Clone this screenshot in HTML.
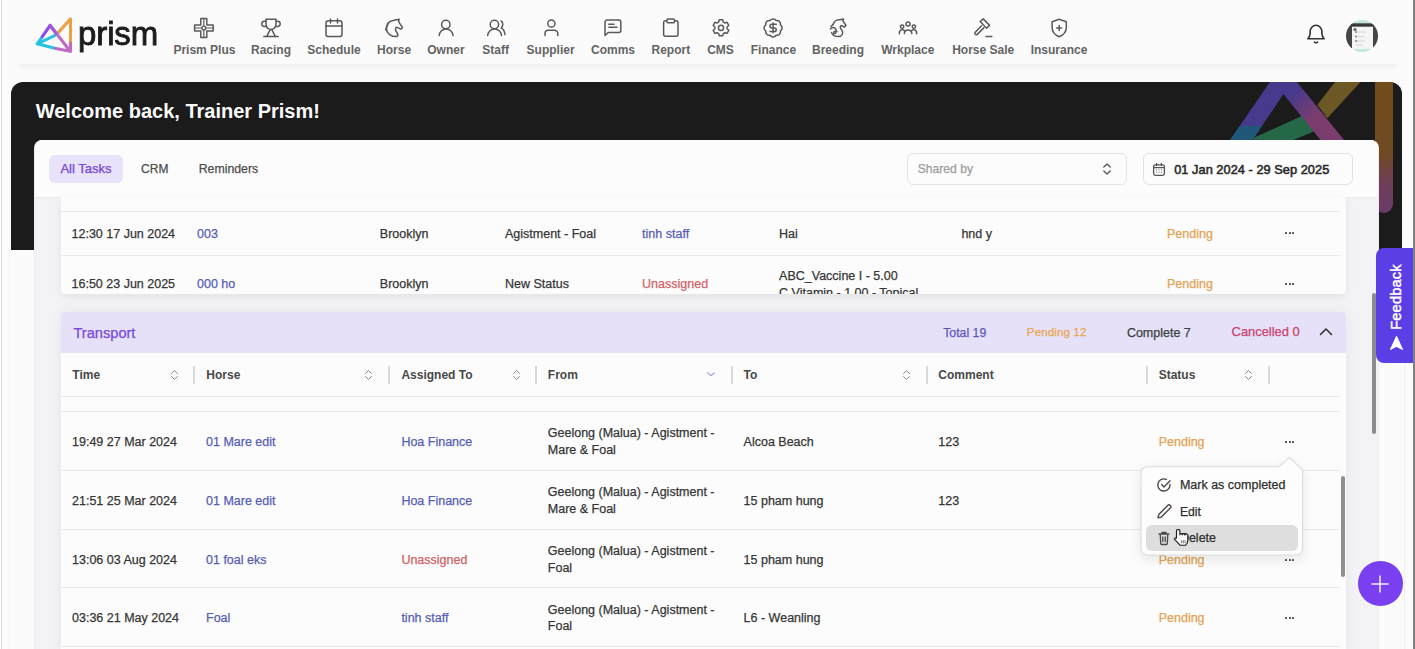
<!DOCTYPE html>
<html><head><meta charset="utf-8">
<style>
*{box-sizing:border-box;margin:0;padding:0}
html,body{width:1415px;height:649px;overflow:hidden}
body{font-family:"Liberation Sans",sans-serif;background:#fbfbfb;position:relative;color:#222}
.abs{position:absolute}
.frame-l{position:absolute;left:1px;top:0;width:1px;height:649px;background:#dedede}
.frame-r{position:absolute;right:2px;top:0;width:1px;height:649px;background:#dcdcdc}
.header{position:absolute;left:2px;top:0;width:1409px;height:66px}
.hshadow{position:absolute;left:14px;top:0;width:1388px;height:64px;background:#fbfbfb;border-radius:0 0 6px 6px;box-shadow:0 8px 7px -4px rgba(0,0,0,0.05)}
.nav{position:absolute;top:0;height:66px}
.nav .lbl{position:absolute;top:43px;font-size:12px;font-weight:bold;color:#636363;white-space:nowrap;letter-spacing:0}
.nav svg{position:absolute;top:17px}
.banner{position:absolute;left:11px;top:82px;width:1391px;height:168px;background:#1b1b1b;border-radius:12px 12px 0 0;overflow:hidden}
.welcome{position:absolute;left:35.7px;top:100px;font-size:20px;font-weight:bold;color:#fafafa;white-space:nowrap}
.card{position:absolute;left:35px;top:140px;width:1343px;height:520px;background:#f3f3f5;box-shadow:-1px 0 0 #ececee,1px 0 0 #ececee;border-radius:8px 8px 0 0}
.cardhead{position:absolute;left:35px;top:140px;width:1343px;height:57.5px;background:#fcfcfc;border-radius:8px 8px 0 0;border-bottom:1px solid #ebebeb}
.pill{position:absolute;left:48.5px;top:155.3px;width:74.3px;height:27.4px;background:#e8e2fb;border-radius:6px}
.selbox{position:absolute;border:1px solid #e3e3e3;border-radius:6px;background:#fcfcfc}
.t{position:absolute;white-space:nowrap;line-height:1;-webkit-text-stroke:0.25px currentColor}
.tbl1{left:61px;top:197px;width:1285px;height:97px;background:#fcfcfc;border-radius:0 0 4px 4px;overflow:hidden;box-shadow:0 3px 8px rgba(0,0,0,0.07)}
.tbl2{left:61px;top:312px;width:1285px;height:340px;background:#fcfcfc;border-radius:4px 4px 0 0;overflow:hidden;box-shadow:0 0 14px rgba(0,0,0,0.06)}
.thead{position:absolute;left:0;top:0;width:1285px;height:41px;background:#e6e1f8}
.dot{position:absolute;width:2.1px;height:2.1px;background:#555;border-radius:0.6px}
.hl{position:absolute;left:0;width:1279px;height:1px;background:#e9e9e9}
.vd{position:absolute;top:54px;width:2px;height:17.5px;background:#d9d9d9}
.nav .ic{position:absolute;top:16px}
.nav .lbl{transform:translateX(-50%)}
.logo-t{position:absolute;left:75.5px;top:13.5px;font-size:34px;color:#1c1c1c;letter-spacing:-0.1px;transform:scaleX(0.97);transform-origin:left;font-weight:normal;-webkit-text-stroke:0.9px #1c1c1c;line-height:normal}
.avatar{left:1344px;top:20px;width:32px;height:32px;border-radius:50%;background:#4a4a4a;overflow:hidden}
.av-top{position:absolute;left:0;top:0;width:32px;height:4px;background:#a6e3d0}
.av-in{position:absolute;left:6px;top:6px;width:20px;height:26px;background:#f6f6f6;border-top:2px solid #333}
.popup{left:1141px;top:467px;width:162px;height:88px;background:#fdfdfd;border:1px solid #e2e2e2;border-radius:7px;box-shadow:0 5px 12px rgba(0,0,0,0.10)}
.fb{left:1376px;top:248px;width:45px;height:115px;background:#5c3ee6;border-radius:8px 0 0 8px}
.frame-r{position:absolute;left:1413px;top:0;width:2px;height:649px;background:#808080;z-index:5}
</style></head>
<body>
<div class="frame-l"></div>
<div class="frame-r"></div>
<div class="abs" style="left:1404px;top:363px;width:1px;height:286px;background:#f0f0f0"></div>
<div class="abs" style="left:9px;top:250px;width:1px;height:399px;background:#f4f4f4"></div>
<div class="hshadow"></div>
<div class="header">
<svg class="abs" style="left:-1px;top:0" width="170" height="66" viewBox="0 0 170 66">
<defs>
<linearGradient id="gp" x1="48.8" y1="24.9" x2="36" y2="43.7" gradientUnits="userSpaceOnUse"><stop offset="0" stop-color="#8c4cf0"/><stop offset="0.5" stop-color="#7a6ae8"/><stop offset="0.6" stop-color="#2bc3e3"/><stop offset="1" stop-color="#22c5e0"/></linearGradient>
<linearGradient id="gc" x1="36" y1="43.7" x2="69.6" y2="51.6" gradientUnits="userSpaceOnUse"><stop offset="0" stop-color="#25c3e2"/><stop offset="0.5" stop-color="#33b8e6"/><stop offset="0.7" stop-color="#b38ee8"/><stop offset="1" stop-color="#c46ec4"/></linearGradient>
<linearGradient id="gk" x1="48.8" y1="24.9" x2="69.6" y2="51.6" gradientUnits="userSpaceOnUse"><stop offset="0" stop-color="#9a55e6"/><stop offset="1" stop-color="#c36cc0"/></linearGradient>
</defs>
<g fill="none" stroke-width="3.1" stroke-linecap="round" stroke-linejoin="round">
<path d="M57.4,32.4L69.5,18.9V43" stroke="#eaa24a"/>
<path d="M54,35.4L36.3,43.8L54.6,48.4" stroke="#27c2e1"/>
<path d="M36.3,43.8L41.3,36.6" stroke="#27c2e1"/>
<path d="M41.3,36.6L49.1,25.5" stroke="#8d4cf0"/>
<path d="M49.1,25.5L69.3,51.3L54.6,48.4" stroke="#c26bc3"/>
<path d="M49.1,25.5L55,33" stroke="#a058e0"/>
<path d="M69.5,43V51.3" stroke="#c26bc3"/>
</g>
</svg>
<div class="abs logo-t">prism</div>
<div class="nav" style="left:-2px"><svg class="ic" style="left:192.4px" width="24" height="24" viewBox="0 0 24 24" fill="none" stroke="#5a5a5a" stroke-width="1.5" stroke-linecap="round" stroke-linejoin="round"><path d="M8.8,2.5H14.8V9H21.2V15H14.8V21.5H8.8V15H2.6V9H8.8Z"/><path d="M11.8,2.5V21.5M2.6,12H21.2" stroke-width="1.2"/><circle cx="11.8" cy="12" r="2.6" fill="#5a5a5a" stroke="none"/><circle cx="11.8" cy="12" r="1.2" fill="#fbfbfb" stroke="none"/></svg>
<div class="lbl" style="left:204.4px">Prism Plus</div>
<svg class="ic" style="left:259.0px" width="24" height="24" viewBox="0 0 24 24" fill="none" stroke="#5a5a5a" stroke-width="1.5" stroke-linecap="round" stroke-linejoin="round"><path d="M7,3.2H17V8.2A5,5.3 0 0 1 7,8.2Z"/><path d="M7,5.2H5.4A2.6,2.6 0 0 0 5.4,10.4H7.6M17,5.2H18.6A2.6,2.6 0 0 1 18.6,10.4H16.4"/><path d="M11.2,13.6L7.6,20.6M12.8,13.6L16.4,20.6M4.8,20.6H19.2"/></svg>
<div class="lbl" style="left:271.0px">Racing</div>
<svg class="ic" style="left:322.0px" width="24" height="24" viewBox="0 0 24 24" fill="none" stroke="#5a5a5a" stroke-width="1.5" stroke-linecap="round" stroke-linejoin="round"><rect x="4" y="4.7" width="16" height="15.9" rx="2.4"/><path d="M4,10H20M8.5,3V6.9M15.5,3V6.9"/></svg>
<div class="lbl" style="left:334.0px">Schedule</div>
<svg class="ic" style="left:382.1px" width="24" height="24" viewBox="0 0 24 24" fill="none" stroke="#5a5a5a" stroke-width="1.5" stroke-linecap="round" stroke-linejoin="round"><path d="M15,20.5C10,21 4.8,18 4.5,13C4.2,8.5 7,5 11,4.5L17.2,3.3L16.6,5.6L20.5,11.6L18.6,13.2L14.6,11.2C13,12.3 13.2,14.2 14.8,16.4C16,18 16,19.6 15,20.5Z"/><path d="M6.5,6.5L3.6,13.8"/></svg>
<div class="lbl" style="left:394.1px">Horse</div>
<svg class="ic" style="left:433.9px" width="24" height="24" viewBox="0 0 24 24" fill="none" stroke="#5a5a5a" stroke-width="1.5" stroke-linecap="round" stroke-linejoin="round"><circle cx="11.8" cy="8.5" r="4.2"/><path d="M5.2,19.6A6.9,6.6 0 0 1 19,19.6"/></svg>
<div class="lbl" style="left:445.9px">Owner</div>
<svg class="ic" style="left:483.7px" width="24" height="24" viewBox="0 0 24 24" fill="none" stroke="#5a5a5a" stroke-width="1.5" stroke-linecap="round" stroke-linejoin="round"><circle cx="10.4" cy="8.5" r="4.2"/><path d="M3.7,19.6A6.9,6.6 0 0 1 17.5,19.6"/><path d="M17.2,5C19.2,6.2 19.4,10.4 17.2,11.8C19.4,13 20.7,15.8 20.9,18.6"/></svg>
<div class="lbl" style="left:495.7px">Staff</div>
<svg class="ic" style="left:538.6px" width="24" height="24" viewBox="0 0 24 24" fill="none" stroke="#5a5a5a" stroke-width="1.5" stroke-linecap="round" stroke-linejoin="round"><circle cx="12.4" cy="7.5" r="3.6"/><path d="M6,19.6V17.6A3.3,3.3 0 0 1 9.3,14.3H15.5A3.3,3.3 0 0 1 18.8,17.6V19.6"/></svg>
<div class="lbl" style="left:550.6px">Supplier</div>
<svg class="ic" style="left:601.0px" width="24" height="24" viewBox="0 0 24 24" fill="none" stroke="#5a5a5a" stroke-width="1.5" stroke-linecap="round" stroke-linejoin="round"><path d="M4,19.5V6.1A2,2 0 0 1 6,4.1H17.8A2,2 0 0 1 19.8,6.1V14.4A2,2 0 0 1 17.8,16.4H7.4Z"/><path d="M7.8,8.2H13M7.8,11.3H16"/></svg>
<div class="lbl" style="left:613.0px">Comms</div>
<svg class="ic" style="left:658.8px" width="24" height="24" viewBox="0 0 24 24" fill="none" stroke="#5a5a5a" stroke-width="1.5" stroke-linecap="round" stroke-linejoin="round"><rect x="4.6" y="4.7" width="14.4" height="15.6" rx="2"/><rect x="7.9" y="3.1" width="7.7" height="3.6" rx="1.2" fill="#fbfbfb"/></svg>
<div class="lbl" style="left:670.8px">Report</div>
<svg class="ic" style="left:708.5px" width="24" height="24" viewBox="0 0 24 24" fill="none" stroke="#5a5a5a" stroke-width="1.5" stroke-linecap="round" stroke-linejoin="round"><path d="M9.68,6.05L10.30,3.78L13.70,3.78L14.32,6.05L15.82,6.91L18.09,6.31L19.80,9.27L18.14,10.94L18.14,12.66L19.80,14.33L18.09,17.29L15.82,16.69L14.32,17.55L13.70,19.82L10.30,19.82L9.68,17.55L8.18,16.69L5.91,17.29L4.20,14.33L5.86,12.66L5.86,10.94L4.20,9.27L5.91,6.31L8.18,6.91Z" stroke-linejoin="round"/><circle cx="12" cy="11.8" r="2.6"/></svg>
<div class="lbl" style="left:720.5px">CMS</div>
<svg class="ic" style="left:761.4px" width="24" height="24" viewBox="0 0 24 24" fill="none" stroke="#5a5a5a" stroke-width="1.5" stroke-linecap="round" stroke-linejoin="round"><g transform="translate(12.1,11.9) scale(0.9) translate(-12,-12)"><path d="M3.85 8.62a4 4 0 0 1 4.78-4.77 4 4 0 0 1 6.74 0 4 4 0 0 1 4.78 4.78 4 4 0 0 1 0 6.74 4 4 0 0 1-4.77 4.78 4 4 0 0 1-6.75 0 4 4 0 0 1-4.78-4.77 4 4 0 0 1 0-6.76Z" stroke-width="1.7"/><path d="M15.5 8h-5a2 2 0 1 0 0 4h3a2 2 0 1 1 0 4H8.5M12 17.5V6.5" stroke-width="1.7"/></g></svg>
<div class="lbl" style="left:773.4px">Finance</div>
<svg class="ic" style="left:826.0px" width="24" height="24" viewBox="0 0 24 24" fill="none" stroke="#5a5a5a" stroke-width="1.5" stroke-linecap="round" stroke-linejoin="round"><path d="M7,8.5C8,5.5 11,3.5 14,3.8L17.5,3L17,5L20,9.5L18.5,11L15,9.5C13.5,10.5 14.5,13 16,14.5C17.5,16.5 16.5,20.5 12.5,20.6C9,20.7 6.5,19 5.5,16.5"/><path d="M4.5,13C6,11 9,11 10,13.5C11,16 9,18.5 8,17.5C6.5,16 9.5,14.5 11,15.5"/><path d="M7,8.5L5,10.5"/></svg>
<div class="lbl" style="left:838.0px">Breeding</div>
<svg class="ic" style="left:895.8px" width="24" height="24" viewBox="0 0 24 24" fill="none" stroke="#5a5a5a" stroke-width="1.5" stroke-linecap="round" stroke-linejoin="round"><circle cx="12.1" cy="8" r="2"/><circle cx="6.1" cy="10.6" r="1.7"/><circle cx="17.9" cy="10.6" r="1.7"/><path d="M8.3,17.5A3.9,4.4 0 0 1 15.9,17.5M3.4,17.8A2.9,3.6 0 0 1 8.6,15M20.6,17.8A2.9,3.6 0 0 0 15.4,15"/></svg>
<div class="lbl" style="left:907.8px">Wrkplace</div>
<svg class="ic" style="left:971.2px" width="24" height="24" viewBox="0 0 24 24" fill="none" stroke="#5a5a5a" stroke-width="1.5" stroke-linecap="round" stroke-linejoin="round"><path d="M9.2,5.6L12.2,2.9L18.6,9.4L15.6,12.2Z"/><path d="M10.6,9.7L4,16.6A1.5,1.5 0 0 0 6,18.6L12.8,11.9"/><path d="M15,20.6H20.8"/></svg>
<div class="lbl" style="left:983.2px">Horse Sale</div>
<svg class="ic" style="left:1047.0px" width="24" height="24" viewBox="0 0 24 24" fill="none" stroke="#5a5a5a" stroke-width="1.5" stroke-linecap="round" stroke-linejoin="round"><path d="M12.2,3.2L19.3,5.8V11.5C19.3,16 16,19.2 12.2,20.8C8.4,19.2 5.1,16 5.1,11.5V5.8Z" stroke-linejoin="round"/><path d="M12.2,9.4V14.4M9.7,11.9H14.7"/></svg>
<div class="lbl" style="left:1059.0px">Insurance</div></div>
<svg class="abs" style="left:1301px;top:22px" width="26" height="24" viewBox="0 0 26 24" fill="none" stroke="#333" stroke-width="1.6" stroke-linecap="round" stroke-linejoin="round"><path d="M4.8,16.8H21.2C19.6,15.4 18.9,13.8 18.9,11.6V9.6C18.9,6.2 16.3,3.3 13,3.3C9.7,3.3 7.1,6.2 7.1,9.6V11.6C7.1,13.8 6.4,15.4 4.8,16.8Z"/><path d="M11.4,20.2A2.2,1.6 0 0 0 14.6,20.2"/></svg>
<svg class="abs" style="left:1344px;top:20px" width="32" height="32" viewBox="0 0 32 32"><defs><clipPath id="avc"><circle cx="16" cy="16" r="16"/></clipPath></defs><g clip-path="url(#avc)"><rect width="32" height="32" fill="#f4f4f4"/><rect x="0" y="0" width="6" height="32" fill="#454545"/><rect x="27" y="0" width="5" height="32" fill="#454545"/><rect x="6" y="0" width="21" height="3.5" fill="#bfe8dc"/><rect x="5" y="3.3" width="23" height="3.4" fill="#3a3a3a"/><rect x="7" y="29" width="19" height="3" fill="#bfe8dc"/><circle cx="9" cy="9.5" r="1.6" fill="#666"/><path d="M10,12H20M10,16.5H18M10,21H19M10,25H17" stroke="#cfcfcf" stroke-width="0.8"/><circle cx="10" cy="12" r="0.9" fill="#777"/><circle cx="10" cy="16.5" r="0.9" fill="#777"/><circle cx="10" cy="21" r="0.9" fill="#777"/></g></svg>
</div>
<div class="banner"></div>
<svg class="abs" style="left:11px;top:82px" width="1391" height="168" viewBox="11 82 1391 168">
<defs>
<linearGradient id="ob" x1="0" y1="82" x2="0" y2="213" gradientUnits="userSpaceOnUse"><stop offset="0" stop-color="#734c1c"/><stop offset="0.55" stop-color="#6f4a22"/><stop offset="0.75" stop-color="#6e3f55"/><stop offset="1" stop-color="#6a3a6a"/></linearGradient>
<linearGradient id="pk" x1="1290" y1="95" x2="1312" y2="118" gradientUnits="userSpaceOnUse"><stop offset="0" stop-color="#47398c"/><stop offset="1" stop-color="#7a3d6e"/></linearGradient>
<clipPath id="band"><path d="M1282.3,64L1223.2,150L1352,150Z M1283.5,94.1L1245.7,150L1328.8,150Z" clip-rule="evenodd"/></clipPath>
</defs>
<path d="M1317.4,104.7L1339.7,76L1366,76L1327.3,118.2Z" fill="#6b5824"/>
<path d="M1250,139.5L1303,115.5L1322,128L1291,141Z" fill="#246848"/>
<g clip-path="url(#band)">
<rect x="1200" y="60" width="200" height="100" fill="#47398c"/>
<rect x="1200" y="126" width="70" height="30" fill="#1f5878"/>
<rect x="1286" y="90" width="80" height="70" fill="url(#pk)"/>
</g>
<rect x="1375" y="70" width="18" height="143" rx="9" fill="url(#ob)"/>
</svg>
<div class="welcome">Welcome back, Trainer Prism!</div>
<div class="card"></div>
<div class="cardhead"></div>
<div class="pill"></div>
<div class="selbox" style="left:907px;top:153px;width:220px;height:32px"></div>
<div class="selbox" style="left:1143px;top:153px;width:210px;height:31.5px"></div>
<div class="t" style="left:60.4px;top:162.40px;font-size:13px;color:#7443d8;">All Tasks</div>
<div class="t" style="left:141px;top:163.24px;font-size:12px;color:#4e4e4e;letter-spacing:0.1px;">CRM</div>
<div class="t" style="left:198.7px;top:162.99px;font-size:12.3px;color:#4e4e4e;">Reminders</div>
<div class="t" style="left:917.8px;top:163.06px;font-size:12.1px;color:#9c9c9c;">Shared by</div>
<svg class="abs" style="left:1100px;top:161px" width="14" height="16" viewBox="0 0 14 16" fill="none" stroke="#555" stroke-width="1.3" stroke-linecap="round" stroke-linejoin="round"><path d="M3.8,6L7,3L10.2,6M3.8,10L7,13L10.2,10"/></svg>
<svg class="abs" style="left:1151px;top:161px" width="16" height="16" viewBox="0 0 16 16" fill="none" stroke="#555" stroke-width="1.3"><rect x="2.6" y="3.8" width="10.8" height="10.6" rx="1.8"/><path d="M2.6,6.7H13.4M5.6,2.4V4.6M10.4,2.4V4.6" stroke-linecap="round"/><path d="M5.2,9H6M7.6,9H8.4M10,9H10.8M5.2,11.3H6M7.6,11.3H8.4M10,11.3H10.8" stroke-width="1"/></svg>
<div class="t" style="left:1174.2px;top:163.91px;font-size:12.75px;color:#2a2a2a;-webkit-text-stroke:0.55px #2a2a2a;letter-spacing:0.05px;">01 Jan 2024 - 29 Sep 2025</div>
<div class="abs tbl1">
<div class="hl" style="top:14px"></div><div class="hl" style="top:58px"></div>
<div class="t" style="left:10.5px;top:30.52px;font-size:12.5px;color:#363636;">12:30 17 Jun 2024</div>
<div class="t" style="left:136px;top:30.52px;font-size:12.5px;color:#565eb6;">003</div>
<div class="t" style="left:318.8px;top:30.52px;font-size:12.5px;color:#363636;">Brooklyn</div>
<div class="t" style="left:444px;top:30.52px;font-size:12.5px;color:#363636;">Agistment - Foal</div>
<div class="t" style="left:581.1px;top:30.52px;font-size:12.5px;color:#565eb6;">tinh staff</div>
<div class="t" style="left:718.1px;top:30.52px;font-size:12.5px;color:#363636;">Hai</div>
<div class="t" style="left:900.4px;top:30.52px;font-size:12.5px;color:#363636;">hnd y</div>
<div class="t" style="left:1106px;top:30.52px;font-size:12.5px;color:#e2a352;">Pending</div>
<div class="dot" style="left:1224.0px;top:35.3px"></div><div class="dot" style="left:1227.6px;top:35.3px"></div><div class="dot" style="left:1231.2px;top:35.3px"></div>
<div class="t" style="left:10.5px;top:81.42px;font-size:12.5px;color:#363636;">16:50 23 Jun 2025</div>
<div class="t" style="left:136px;top:81.42px;font-size:12.5px;color:#565eb6;">000 ho</div>
<div class="t" style="left:318.8px;top:81.42px;font-size:12.5px;color:#363636;">Brooklyn</div>
<div class="t" style="left:444px;top:81.42px;font-size:12.5px;color:#363636;">New Status</div>
<div class="t" style="left:581.1px;top:81.42px;font-size:12.5px;color:#d16267;">Unassigned</div>
<div class="t" style="left:718.1px;top:72.82px;font-size:12.5px;color:#363636;">ABC_Vaccine I - 5.00</div>
<div class="t" style="left:718.1px;top:89.62px;font-size:12.5px;color:#363636;">C Vitamin - 1.00 - Topical</div>
<div class="t" style="left:1106px;top:81.42px;font-size:12.5px;color:#e2a352;">Pending</div>
<div class="dot" style="left:1224.0px;top:86.3px"></div><div class="dot" style="left:1227.6px;top:86.3px"></div><div class="dot" style="left:1231.2px;top:86.3px"></div>
</div>
<div class="abs tbl2">
<div class="thead"></div>
<div class="t" style="left:12.5px;top:13.64px;font-size:14.6px;color:#7747dc;">Transport</div>
<div class="t" style="left:882.2px;top:14.69px;font-size:12.3px;color:#5f57bd;">Total 19</div>
<div class="t" style="left:965.8px;top:14.48px;font-size:11.6px;color:#e6a650;letter-spacing:0.1px;">Pending 12</div>
<div class="t" style="left:1065.9px;top:14.52px;font-size:12.5px;color:#36413d;">Complete 7</div>
<div class="t" style="left:1170.6px;top:14.18px;font-size:12.9px;color:#c8426e;">Cancelled 0</div>
<svg class="abs" style="left:1257px;top:14px" width="16" height="12" viewBox="0 0 16 12" fill="none" stroke="#333" stroke-width="1.6" stroke-linecap="round" stroke-linejoin="round"><path d="M2.5,8.5L8,3L13.5,8.5"/></svg>
<div class="t" style="left:11.299999999999997px;top:57.44px;font-size:12px;font-weight:700;-webkit-text-stroke:0;color:#484848;">Time</div>
<svg class="abs" style="left:109.0px;top:57px" width="9" height="12" viewBox="0 0 9 12" fill="none" stroke="#8a8a8a" stroke-width="1" stroke-linecap="round" stroke-linejoin="round"><path d="M1.5,4.5L4.5,1.6L7.5,4.5M1.5,7.5L4.5,10.4L7.5,7.5"/></svg>
<div class="vd" style="left:132.0px"></div>
<div class="t" style="left:145.3px;top:57.44px;font-size:12px;font-weight:700;-webkit-text-stroke:0;color:#484848;">Horse</div>
<svg class="abs" style="left:303.2px;top:57px" width="9" height="12" viewBox="0 0 9 12" fill="none" stroke="#8a8a8a" stroke-width="1" stroke-linecap="round" stroke-linejoin="round"><path d="M1.5,4.5L4.5,1.6L7.5,4.5M1.5,7.5L4.5,10.4L7.5,7.5"/></svg>
<div class="vd" style="left:327.0px"></div>
<div class="t" style="left:340.4px;top:57.44px;font-size:12px;font-weight:700;-webkit-text-stroke:0;color:#484848;">Assigned To</div>
<svg class="abs" style="left:450.8px;top:57px" width="9" height="12" viewBox="0 0 9 12" fill="none" stroke="#8a8a8a" stroke-width="1" stroke-linecap="round" stroke-linejoin="round"><path d="M1.5,4.5L4.5,1.6L7.5,4.5M1.5,7.5L4.5,10.4L7.5,7.5"/></svg>
<div class="vd" style="left:474.0px"></div>
<div class="t" style="left:486.79999999999995px;top:57.44px;font-size:12px;font-weight:700;-webkit-text-stroke:0;color:#484848;">From</div>
<div class="vd" style="left:670.0px"></div>
<div class="t" style="left:682.6px;top:57.44px;font-size:12px;font-weight:700;-webkit-text-stroke:0;color:#484848;">To</div>
<svg class="abs" style="left:841.3px;top:57px" width="9" height="12" viewBox="0 0 9 12" fill="none" stroke="#8a8a8a" stroke-width="1" stroke-linecap="round" stroke-linejoin="round"><path d="M1.5,4.5L4.5,1.6L7.5,4.5M1.5,7.5L4.5,10.4L7.5,7.5"/></svg>
<div class="vd" style="left:865.0px"></div>
<div class="t" style="left:877.3px;top:57.44px;font-size:12px;font-weight:700;-webkit-text-stroke:0;color:#484848;">Comment</div>
<div class="vd" style="left:1085.2px"></div>
<div class="t" style="left:1097.7px;top:57.44px;font-size:12px;font-weight:700;-webkit-text-stroke:0;color:#484848;">Status</div>
<svg class="abs" style="left:1183.0px;top:57px" width="9" height="12" viewBox="0 0 9 12" fill="none" stroke="#8a8a8a" stroke-width="1" stroke-linecap="round" stroke-linejoin="round"><path d="M1.5,4.5L4.5,1.6L7.5,4.5M1.5,7.5L4.5,10.4L7.5,7.5"/></svg>
<div class="vd" style="left:1207.2px"></div>
<svg class="abs" style="left:645px;top:57px" width="10" height="10" viewBox="0 0 10 10" fill="none" stroke="#9c8fe0" stroke-width="1.1" stroke-linecap="round" stroke-linejoin="round"><path d="M1.8,3.8L5,6.6L8.2,3.8"/></svg>
<div class="hl" style="top:83.8px"></div>
<div class="hl" style="top:98.9px"></div>
<div class="hl" style="top:157.5px"></div>
<div class="hl" style="top:216.5px"></div>
<div class="hl" style="top:275.3px"></div>
<div class="hl" style="top:333.8px"></div>
<div class="t" style="left:11px;top:124.12px;font-size:12.5px;color:#363636;">19:49 27 Mar 2024</div>
<div class="t" style="left:145px;top:124.12px;font-size:12.5px;color:#565eb6;">01 Mare edit</div>
<div class="t" style="left:340.4px;top:124.12px;font-size:12.5px;color:#565eb6;">Hoa Finance</div>
<div class="t" style="left:486.79999999999995px;top:115.32px;font-size:12.5px;color:#363636;">Geelong (Malua) - Agistment -</div>
<div class="t" style="left:486.79999999999995px;top:131.82px;font-size:12.5px;color:#363636;">Mare &amp; Foal</div>
<div class="t" style="left:682.6px;top:124.12px;font-size:12.5px;color:#363636;">Alcoa Beach</div>
<div class="t" style="left:877.3px;top:124.12px;font-size:12.5px;color:#363636;">123</div>
<div class="t" style="left:1097.7px;top:124.12px;font-size:12.5px;color:#e2a352;">Pending</div>
<div class="dot" style="left:1224.0px;top:128.7px"></div><div class="dot" style="left:1227.6px;top:128.7px"></div><div class="dot" style="left:1231.2px;top:128.7px"></div>
<div class="t" style="left:11px;top:183.12px;font-size:12.5px;color:#363636;">21:51 25 Mar 2024</div>
<div class="t" style="left:145px;top:183.12px;font-size:12.5px;color:#565eb6;">01 Mare edit</div>
<div class="t" style="left:340.4px;top:183.12px;font-size:12.5px;color:#565eb6;">Hoa Finance</div>
<div class="t" style="left:486.79999999999995px;top:174.32px;font-size:12.5px;color:#363636;">Geelong (Malua) - Agistment -</div>
<div class="t" style="left:486.79999999999995px;top:190.82px;font-size:12.5px;color:#363636;">Mare &amp; Foal</div>
<div class="t" style="left:682.6px;top:183.12px;font-size:12.5px;color:#363636;">15 pham hung</div>
<div class="t" style="left:877.3px;top:183.12px;font-size:12.5px;color:#363636;">123</div>
<div class="t" style="left:1097.7px;top:183.12px;font-size:12.5px;color:#e2a352;">Pending</div>
<div class="dot" style="left:1224.0px;top:187.7px"></div><div class="dot" style="left:1227.6px;top:187.7px"></div><div class="dot" style="left:1231.2px;top:187.7px"></div>
<div class="t" style="left:11px;top:242.12px;font-size:12.5px;color:#363636;">13:06 03 Aug 2024</div>
<div class="t" style="left:145px;top:242.12px;font-size:12.5px;color:#565eb6;">01 foal eks</div>
<div class="t" style="left:340.4px;top:242.12px;font-size:12.5px;color:#d16267;">Unassigned</div>
<div class="t" style="left:486.79999999999995px;top:233.32px;font-size:12.5px;color:#363636;">Geelong (Malua) - Agistment -</div>
<div class="t" style="left:486.79999999999995px;top:249.82px;font-size:12.5px;color:#363636;">Foal</div>
<div class="t" style="left:682.6px;top:242.12px;font-size:12.5px;color:#363636;">15 pham hung</div>
<div class="t" style="left:1097.7px;top:242.12px;font-size:12.5px;color:#e2a352;">Pending</div>
<div class="dot" style="left:1224.0px;top:246.7px"></div><div class="dot" style="left:1227.6px;top:246.7px"></div><div class="dot" style="left:1231.2px;top:246.7px"></div>
<div class="t" style="left:11px;top:300.32px;font-size:12.5px;color:#363636;">03:36 21 May 2024</div>
<div class="t" style="left:145px;top:300.32px;font-size:12.5px;color:#565eb6;">Foal</div>
<div class="t" style="left:340.4px;top:300.32px;font-size:12.5px;color:#565eb6;">tinh staff</div>
<div class="t" style="left:486.79999999999995px;top:291.52px;font-size:12.5px;color:#363636;">Geelong (Malua) - Agistment -</div>
<div class="t" style="left:486.79999999999995px;top:308.02px;font-size:12.5px;color:#363636;">Foal</div>
<div class="t" style="left:682.6px;top:300.32px;font-size:12.5px;color:#363636;">L6 - Weanling</div>
<div class="t" style="left:1097.7px;top:300.32px;font-size:12.5px;color:#e2a352;">Pending</div>
<div class="dot" style="left:1224.0px;top:304.9px"></div><div class="dot" style="left:1227.6px;top:304.9px"></div><div class="dot" style="left:1231.2px;top:304.9px"></div>
</div>
<div class="abs" style="left:1340.5px;top:475.5px;width:4px;height:101px;background:#8f8f8f;border-radius:2px"></div>
<div class="abs" style="left:1372px;top:293px;width:3.6px;height:141px;background:#8c8c8c;border-radius:2px"></div>
<svg class="abs" style="left:1130px;top:450px;filter:drop-shadow(0 4px 6px rgba(0,0,0,0.09))" width="185" height="115" viewBox="1130 450 185 115"><path d="M1148,466.8H1279L1289.4,457.3L1302.6,470.2V548.5A6.5,6.5 0 0 1 1296.1,555H1147.5A6.5,6.5 0 0 1 1141,548.5V473.3A6.5,6.5 0 0 1 1147.5,466.8Z" fill="#fdfdfd" stroke="#dcdcdc" stroke-width="1.1" stroke-linejoin="round"/></svg>
<div class="abs" style="left:1146px;top:525.4px;width:152px;height:26px;background:#dedede;border-radius:6px"></div>
<svg class="abs" style="left:1156px;top:477px" width="16" height="16" viewBox="0 0 16 16" fill="none" stroke="#4a4a4a" stroke-width="1.4" stroke-linecap="round" stroke-linejoin="round"><path d="M14,7.4V8A6.1,6.1 0 1 1 10.4,2.4"/><path d="M5.6,7.6L8,10L14,3.8"/></svg>
<svg class="abs" style="left:1156px;top:503px" width="16" height="16" viewBox="0 0 16 16" fill="none" stroke="#4a4a4a" stroke-width="1.4" stroke-linecap="round" stroke-linejoin="round"><path d="M11.6,2.4A1.9,1.9 0 0 1 14.3,5.1L5.3,14.1L2,14.9L2.8,11.6Z"/></svg>
<svg class="abs" style="left:1157px;top:530px" width="14" height="16" viewBox="0 0 14 16" fill="none" stroke="#4a4a4a" stroke-width="1.3" stroke-linecap="round" stroke-linejoin="round"><path d="M2,4H12M5,4V2.5H9V4M3.2,4L3.7,13.5A1,1 0 0 0 4.7,14.5H9.3A1,1 0 0 0 10.3,13.5L10.8,4M5.8,7V11.5M8.2,7V11.5"/></svg>
<div class="t" style="left:1179.9px;top:479.12px;font-size:12.5px;color:#2e2e2e;">Mark as completed</div>
<div class="t" style="left:1179.9px;top:505.67px;font-size:12.2px;color:#2e2e2e;">Edit</div>
<div class="t" style="left:1179.9px;top:531.62px;font-size:12.5px;color:#2e2e2e;">Delete</div>
<svg class="abs" style="left:1172.6px;top:529.3px" width="17" height="18" viewBox="0 0 17 18"><path d="M3.5,9.2V2.1A1.7,1.7 0 0 1 6.9,2.1V5.8A1.25,1.25 0 0 1 9.4,5.8A1.25,1.25 0 0 1 11.9,6.1A1.3,1.3 0 0 1 14.8,6.8V11.2C14.8,13.6 13.9,15.1 12.7,16.2H7L1.4,10.2A1.25,1.25 0 0 1 3.5,9.2Z" fill="#fbfbfb" stroke="#1e1e1e" stroke-width="1.15" stroke-linejoin="round"/><path d="M8.6,11.3V14.2M10.4,11.3V14.2M12.2,11.3V14.2" stroke="#8a8a8a" stroke-width="1.2"/></svg>
<div class="abs fb"></div>
<div class="t" style="left:1396px;top:297px;font-size:14.6px;color:#fff;transform:translate(-50%,-50%) rotate(-90deg);letter-spacing:0.2px;-webkit-text-stroke:0.45px #fff">Feedback</div>
<svg class="abs" style="left:1389px;top:335px" width="15" height="16" viewBox="0 0 15 16"><path d="M7.5,1.2L13.6,14.6L7.5,11.4L1.4,14.6Z" fill="#fff" stroke="#fff" stroke-width="1" stroke-linejoin="round"/></svg>
<div class="abs" style="left:1358px;top:561.4px;width:44.5px;height:44.5px;border-radius:50%;background:#7a3ff0"></div>
<svg class="abs" style="left:1370px;top:573.6px" width="20" height="20" viewBox="0 0 20 20" fill="none" stroke="#f4f0ff" stroke-width="1.5" stroke-linecap="round"><path d="M10,2V18M2,10H18"/></svg>
</body></html>
